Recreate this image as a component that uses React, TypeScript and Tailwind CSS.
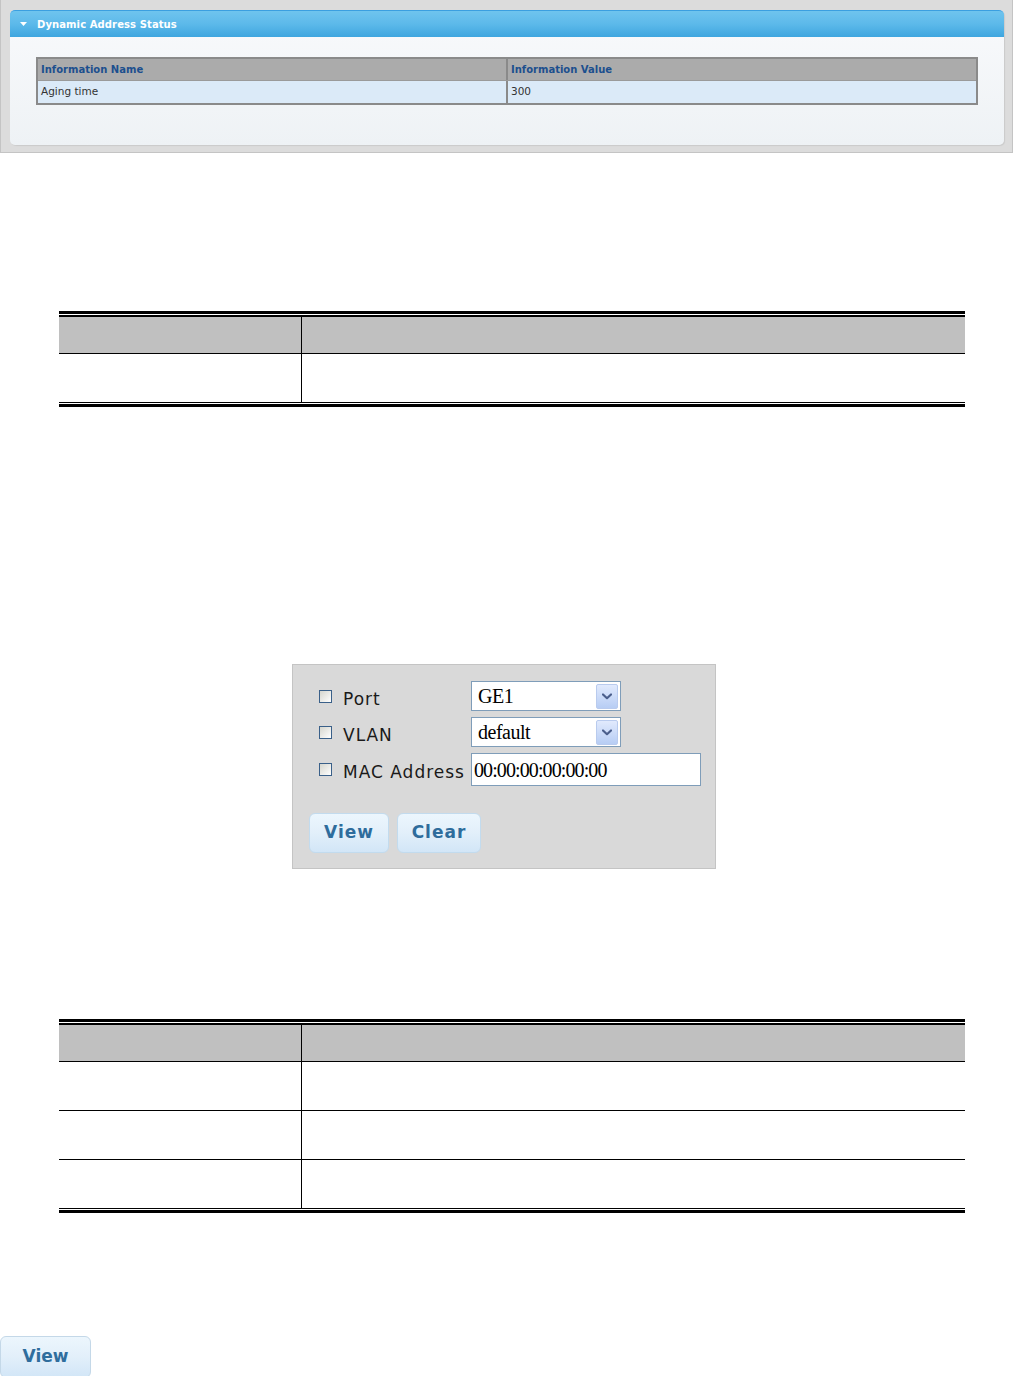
import React from "react";

const sans = "font-['DejaVu_Sans',Verdana,sans-serif]";
const serif = "font-['Liberation_Serif','Times_New_Roman',serif]";

function Chevron() {
	return (
		<svg width="10" height="7" viewBox="0 0 10 7" fill="none">
			<path d="M1 1.5 L5 5.2 L9 1.5" stroke="#4b5f8c" strokeWidth="2.2" strokeLinecap="round" strokeLinejoin="round" />
		</svg>
	);
}

function Checkbox() {
	return <span className="block shrink-0 w-[13px] h-[13px] border border-[#3a6089] bg-gradient-to-br from-[#d6d6ce] to-white" />;
}

function Select({ value }: { value: string }) {
	return (
		<div className="flex items-center w-[150px] h-[30px] border border-[#7f9db9] bg-white pl-[6px] pr-[2px]">
			<span className={`${serif} flex-1 text-[20px] tracking-[-0.5px] text-black leading-none`}>{value}</span>
			<span className="flex items-center justify-center w-[22px] h-[25px] rounded-[2px] border border-[#b9cbee] bg-gradient-to-b from-[#e1eafd] to-[#b7cdf4]">
				<Chevron />
			</span>
		</div>
	);
}

function Btn({ label, w }: { label: string; w: string }) {
	return (
		<button
			className={`${sans} ${w} h-[40px] rounded-[6px] border border-[#c2dbee] bg-gradient-to-b from-[#ecf6fd] via-[#e2effa] to-[#d2e6f7] text-[17px] font-bold tracking-[1px] text-[#2e6c9c]`}
		>
			{label}
		</button>
	);
}

function DescTable({ rows }: { rows: number }) {
	return (
		<div className="ml-[59px] w-[906px] border-t-[3px] border-black">
			<div className="mt-px border-t-2 border-black">
				<div className="flex h-[37px] border-b border-black bg-[#c0c0c0]">
					<div className="w-[243px] border-r border-black" />
					<div className="flex-1" />
				</div>
				{Array.from({ length: rows }).map((_, i) => (
					<div key={i} className="flex h-[49px] border-b border-black bg-white">
						<div className="w-[243px] border-r border-black" />
						<div className="flex-1" />
					</div>
				))}
			</div>
			<div className="mt-px border-t-[3px] border-black" />
		</div>
	);
}

export default function App() {
	return (
		<div className="w-[1013px] h-[1376px] overflow-hidden bg-white">
			{/* status panel */}
			<div className="h-[153px] bg-[#dcdcdc] border-x border-b border-[#c4c4c4] pt-[10px] pl-[9px] pr-[8px]">
				<div className="h-[135px] rounded-[5px] bg-gradient-to-b from-[#f9fafc] to-[#eef2f5] shadow-[1px_1px_1px_rgba(0,0,0,0.08)]">
					<div className="flex items-center h-[27px] rounded-t-[5px] border-t border-[#3b9fe0] bg-gradient-to-b from-[#6fc4ee] via-[#5cb9ea] to-[#3ea6df] pl-[10px]">
						<svg width="7" height="4" viewBox="0 0 7 4" className="mr-[10px]">
							<path d="M0 0 H7 L3.5 4 Z" fill="#ffffff" />
						</svg>
						<span className={`${sans} text-[10px] font-bold text-white tracking-[0.1px]`}>Dynamic Address Status</span>
					</div>
					<div className="pt-[20px] pl-[26px]">
						<div className={`${sans} w-[942px] border-2 border-[#8a8a8a] text-[10px]`}>
							<div className="flex h-[22px] bg-[#ababab] border-b border-[#9a9a9a] font-bold text-[#1c4f8e]">
								<div className="w-[470px] border-r-2 border-[#8a8a8a] pl-[3px] flex items-center">Information Name</div>
								<div className="flex-1 pl-[3px] flex items-center">Information Value</div>
							</div>
							<div className="flex h-[22px] bg-[#dbeaf8] text-[#333] text-[10.5px]">
								<div className="w-[470px] border-r-2 border-[#8a8a8a] pl-[3px] flex items-center">Aging time</div>
								<div className="flex-1 pl-[3px] flex items-center">300</div>
							</div>
						</div>
					</div>
				</div>
			</div>

			<div className="mt-[158px]">
				<DescTable rows={1} />
			</div>

			{/* filter form */}
			<div className="mt-[257px] ml-[292px] w-[424px] h-[205px] border border-[#c4c4c4] bg-[#d9d9d9] pt-[16px]">
				<div className={`${sans} pl-[26px] flex flex-col gap-[6px] text-[17px] tracking-[1px] text-[#1a1a1a]`}>
					<div className="flex items-center h-[30px]">
						<div className="w-[152px] flex items-center">
							<Checkbox />
							<span className="ml-[11px] mt-[6px] leading-none">Port</span>
						</div>
						<Select value="GE1" />
					</div>
					<div className="flex items-center h-[30px]">
						<div className="w-[152px] flex items-center">
							<Checkbox />
							<span className="ml-[11px] mt-[6px] leading-none">VLAN</span>
						</div>
						<Select value="default" />
					</div>
					<div className="flex items-center h-[33px]">
						<div className="w-[152px] flex items-center">
							<Checkbox />
							<span className="ml-[11px] mt-[6px] leading-none whitespace-nowrap">MAC Address</span>
						</div>
						<div className="flex items-center w-[230px] h-[33px] border border-[#7f9db9] bg-white pl-[2px]">
							<span className={`${serif} text-[20px] tracking-[-0.9px] text-black leading-none`}>00:00:00:00:00:00</span>
						</div>
					</div>
				</div>
				<div className="flex gap-[8px] mt-[27px] pl-[16px]">
					<Btn label="View" w="w-[80px]" />
					<Btn label="Clear" w="w-[84px]" />
				</div>
			</div>

			<div className="mt-[150px]">
				<DescTable rows={3} />
			</div>

			<div className="mt-[123px]">
				<button
					className={`${sans} w-[91px] h-[42px] rounded-[6px] border border-[#c4d8e8] bg-gradient-to-b from-[#ecf6fd] via-[#e2effa] to-[#d2e6f7] text-[17px] font-bold text-[#2f6d9d]`}
				>
					View
				</button>
			</div>
		</div>
	);
}
